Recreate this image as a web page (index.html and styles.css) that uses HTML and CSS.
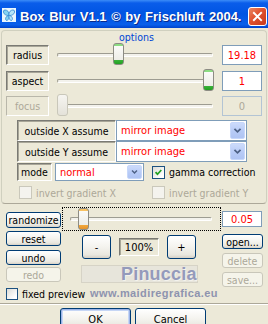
FILE: index.html
```html
<!DOCTYPE html>
<html>
<head>
<meta charset="utf-8">
<title>Box Blur</title>
<link rel="stylesheet" href="styles.css">
</head>
<body>
<div class="titlebar">
  <svg class="appicon" viewBox="0 0 14 14">
    <rect width="14" height="14" fill="#EAF6FD"/>
    <path d="M7 5 C6 2 2 1 1.5 3 C1 6 4 7.5 6.5 7.5 C4 8 2.5 11 4.5 12.5 C6 13 7 10 7 8 Z" fill="#86D3F2" stroke="#2F86D2" stroke-width="0.8"/>
    <path d="M7 5 C8 2 12 1 12.5 3 C13 6 10 7.5 7.5 7.5 C10 8 11.5 11 9.5 12.5 C8 13 7 10 7 8 Z" fill="#B6E6F8" stroke="#2F86D2" stroke-width="0.8"/>
  </svg>
  <span class="title">Box Blur V1.1 © by Frischluft 2004.</span>
  <span class="close">
    <svg viewBox="0 0 19 19"><path d="M5.5 5.5 L13.5 13.5 M13.5 5.5 L5.5 13.5" stroke="#fff" stroke-width="2.2" stroke-linecap="square"/></svg>
  </span>
</div>

<div class="group">
  <div class="legend">options</div>

  <div class="prow r1">
    <div class="sunken plabel">radius</div>
    <div class="slider">
      <div class="track"></div>
      <div class="thumb" style="left:56px"></div>
    </div>
    <div class="value">19.18</div>
  </div>

  <div class="prow r2">
    <div class="sunken plabel">aspect</div>
    <div class="slider">
      <div class="track"></div>
      <div class="thumb" style="left:146px"></div>
    </div>
    <div class="value">1</div>
  </div>

  <div class="prow r3 disabled">
    <div class="sunken plabel">focus</div>
    <div class="slider">
      <div class="track"></div>
      <div class="thumb off" style="left:0px"></div>
    </div>
    <div class="value">0</div>
  </div>

  <div class="arow ax">
    <div class="sunken alabel">outside X assume</div>
    <div class="combo wide"><span class="ctext">mirror image</span><span class="cbtn"><svg viewBox="0 0 15 17"><path d="M4 6.5 L7.5 10 L11 6.5" fill="none" stroke="#4D6185" stroke-width="2"/></svg></span></div>
  </div>
  <div class="arow ay">
    <div class="sunken alabel">outside Y assume</div>
    <div class="combo wide"><span class="ctext">mirror image</span><span class="cbtn"><svg viewBox="0 0 15 17"><path d="M4 6.5 L7.5 10 L11 6.5" fill="none" stroke="#4D6185" stroke-width="2"/></svg></span></div>
  </div>
  <div class="arow mode">
    <div class="sunken mlabel">mode</div>
    <div class="combo narrow"><span class="ctext">normal</span><span class="cbtn"><svg viewBox="0 0 15 17"><path d="M4 6.5 L7.5 10 L11 6.5" fill="none" stroke="#4D6185" stroke-width="2"/></svg></span></div>
    <span class="check on"><svg viewBox="0 0 13 13"><path d="M3 6 L5.3 8.5 L9.8 3.5" fill="none" stroke="#21A121" stroke-width="2"/></svg></span>
    <span class="clabel">gamma correction</span>
  </div>

  <div class="invrow">
    <div class="inv first"><span class="check off"></span><span class="clabel">invert gradient X</span></div>
    <div class="inv"><span class="check off"></span><span class="clabel">invert gradient Y</span></div>
  </div>
</div>

<div class="bottom">
  <div class="cell">
    <button class="btn rand">randomize</button>
  </div>
  <div class="cell">
    <div class="dotted">
      <div class="track"></div>
      <div class="thumb hot" style="left:15px"></div>
    </div>
  </div>
  <div class="cell">
    <div class="value small">0.05</div>
  </div>

  <div class="leftcol">
    <button class="btn b-reset">reset</button>
    <button class="btn b-undo">undo</button>
    <button class="btn b-redo dis">redo</button>
  </div>
  <div class="midcol">
    <div class="zoomrow">
      <button class="btn zb">-</button>
      <div class="sunken pct">100%</div>
      <button class="btn zb">+</button>
    </div>
    <div class="preview"></div>
  </div>
  <div class="rightcol">
    <button class="btn b-open">open...</button>
    <button class="btn b-del dis">delete</button>
    <button class="btn b-save dis">save...</button>
  </div>

  <div class="fixrow">
    <span class="check plain"></span><span class="clabel">fixed preview</span>
  </div>
</div>

<div class="footer">
  <button class="btn big default">OK</button>
  <button class="btn big">Cancel</button>
</div>

<div class="wm1">Pinuccia</div>
<div class="wm2">www.maidiregrafica.eu</div>
</body>
</html>
```

FILE: styles.css
```css
* { box-sizing: border-box; margin: 0; padding: 0; }
html, body { width: 268px; height: 324px; overflow: hidden; }
body {
  position: relative;
  background: #ECE9D8;
  font-family: "DejaVu Sans Condensed", "Liberation Sans", sans-serif;
  font-size: 10.5px;
  color: #000;
}

/* title bar */
.titlebar {
  height: 28px;
  display: flex;
  align-items: flex-start;
  color: #fff;
  background: linear-gradient(180deg, #3C8CF8 0, #0A5DEA 3px, #0054E3 50%, #0A5FEA 88%, #0043CC 100%);
}
.appicon { width: 14px; height: 14px; margin: 8px 0 0 2px; flex: none; }
.title {
  flex: 1;
  margin: 9px 0 0 4px;
  font: bold 13px/16px "Liberation Sans", sans-serif;
  white-space: nowrap;
  word-spacing: 1px;
  text-shadow: 1px 1px 0 #0A2A8A;
}
.close {
  flex: none;
  width: 19px; height: 19px;
  margin: 7px 1px 0 0;
  border: 1px solid #fff;
  border-radius: 3px;
  background: linear-gradient(135deg, #E98763 0, #E0512E 45%, #C63A1C 100%);
}
.close svg { display: block; width: 17px; height: 17px; }

/* options group */
.group {
  margin: 2px 1px 0;
  border: 1px solid #D0D0BF;
  border-bottom-color: #ACA899;
  border-radius: 4px;
  padding: 0 4px 4px 4px;
}
.legend {
  height: 13px;
  line-height: 13px;
  text-align: center;
  padding-left: 5px;
  color: #0046D5;
}
.prow { display: flex; align-items: center; height: 20px; }
.r1 { margin-top: 1px; }
.r2 { margin-top: 6px; }
.r3 { margin-top: 5px; }

.sunken {
  border: 1px solid;
  border-color: #7A7A74 #FFFFFF #FFFFFF #7A7A74;
  box-shadow: inset 1px 1px 0 #A8A698;
  display: flex; align-items: center; justify-content: center;
  white-space: nowrap;
}
.plabel { width: 43px; height: 20px; }
.slider { position: relative; width: 156px; height: 20px; margin-left: 8px; }
.track {
  position: absolute; left: 0; right: 0; top: 8px;
  height: 4px;
  border: 1px solid;
  border-color: #9D9C91 #FFFFFF #FFFFFF #9D9C91;
  border-radius: 2px;
  background: #F3F2EC;
}
.thumb {
  position: absolute; top: -2px;
  width: 11px; height: 22px;
  border: 1px solid #8D8C84;
  border-radius: 3px;
  background: linear-gradient(180deg, #8CDD82 0, #8CDD82 2px, #FBFBF9 2px, #EDEDE7 calc(100% - 4px), #3BB33B calc(100% - 4px), #21A121 100%);
}
.thumb.off { background: linear-gradient(180deg, #F6F5F1, #E4E2D9); border-color: #C9C7BA; }
.thumb.hot { top: 0; background: linear-gradient(180deg, #F9C262 0, #F9C262 2px, #FBFBF9 2px, #EDEDE7 calc(100% - 4px), #F2A93C calc(100% - 4px), #E5932B 100%); }

.value {
  width: 40px; height: 20px; margin-left: 9px;
  border: 1px solid #7F9DB9;
  background: #fff;
  color: #F00;
  display: flex; align-items: center; justify-content: center;
  font-size: 11px;
}
.disabled .plabel { color: #ACA899; border-color: #B9B7AA #FFFFFF #FFFFFF #B9B7AA; box-shadow: none; }
.disabled .value { background: #ECE9D8; border-color: #B3C4D4; color: #ACA899; }

/* assume rows */
.arow { display: flex; align-items: stretch; margin-left: 11px; }
.ax { margin-top: 4px; height: 21px; }
.ay { height: 21px; }
.mode { margin-top: 1px; height: 18px; align-items: center; }
.alabel { width: 99px; height: 21px; }
.mlabel { width: 35px; height: 18px; }
.combo {
  display: flex; align-items: center;
  border: 1px solid #7F9DB9;
  background: #fff;
  color: #F00;
  padding: 1px;
}
.combo.wide { width: 131px; height: 21px; }
.combo.narrow { width: 89px; height: 18px; margin-left: 3px; }
.ctext { flex: 1; padding-left: 3px; white-space: nowrap; font-size: 11px; }
.cbtn {
  flex: none; width: 15px; height: 100%;
  border: 1px solid #C6D7FA;
  border-radius: 2px;
  background: linear-gradient(180deg, #CCDBFB 0, #B6CAF6 60%, #AFC4F3 100%);
}
.cbtn svg { display: block; width: 100%; height: 100%; }

.check {
  flex: none;
  display: inline-block;
  width: 13px; height: 13px;
  border: 1px solid #1C5180;
  background: linear-gradient(135deg, #DCDCD7 0, #FFFFFF 80%);
}
.check svg { display: block; width: 11px; height: 11px; }
.mode .check { margin-left: 8px; }
.clabel { margin-left: 4px; white-space: nowrap; }
.check.off { border-color: #CAC8BB; background: #F4F3EE; }

.invrow { display: flex; margin-top: 5px; height: 13px; align-items: center; }
.inv { display: flex; align-items: center; color: #ACA899; }
.inv.first { width: 146px; padding-left: 13px; }

/* bottom section */
.bottom {
  display: grid;
  grid-template-columns: 56px 160px 40px;
  grid-template-rows: 24px 56px auto;
  margin-top: 3px;
  padding: 0 6px;
}
.btn {
  display: flex; align-items: center; justify-content: center;
  font: inherit;
  color: #000;
  border: 1px solid #003C74;
  border-radius: 3px;
  background: linear-gradient(180deg, #FFFFFF 0, #F4F3EE 50%, #E9E7DF 85%, #D6D0C5 100%);
  white-space: nowrap;
}
.btn.dis { border-color: #C9C7BA; background: #F5F4EA; color: #ACA899; }
.rand { width: 55px; height: 16px; margin-top: 5px; }
.dotted {
  position: relative;
  width: 159px; height: 24px;
  border: 1px dotted #000;
}
.dotted .track { left: 7px; right: 8px; top: 9px; }
.value.small { width: 40px; height: 16px; margin: 4px 0 0 0; }

.leftcol, .rightcol, .midcol { display: flex; flex-direction: column; }
.leftcol .btn { width: 55px; height: 15px; }
.b-undo { margin-top: 4px; }
.b-redo { margin-top: 2px; }
.rightcol .btn { width: 41px; height: 15px; }
.b-open { margin-top: 3px; }
.b-del, .b-save { margin-top: 4px; }

.zoomrow { display: flex; align-items: center; margin: 4px 0 0 20px; height: 24px; }
.zb { width: 29px; height: 24px; font-size: 11px; }
.pct { width: 40px; height: 18px; margin: 0 8px; font-size: 11px; }
.preview {
  width: 117px; height: 18px;
  margin: 6px 0 0 19px;
  border: 1px solid #D6D3C6;
  background: #E7E5DB;
}

.fixrow { grid-column: 1 / 4; display: flex; align-items: center; margin-top: 1px; height: 12px; }
.check.plain { width: 12px; height: 12px; }

/* footer */
.footer {
  display: flex;
  justify-content: center;
  gap: 4px;
  margin-top: 3px;
  padding: 4px 2px 0 0;
  border-top: 1px solid #ACA899;
  box-shadow: inset 0 1px 0 #FFFFFF;
}
.btn.big { width: 71px; height: 22px; font-size: 11px; }
.btn.default { box-shadow: inset 0 0 0 1px #9DB4E8, inset 0 0 0 2px #C6D6F5; }

/* watermark overlay */
.wm1 {
  position: absolute; left: 121px; top: 263px;
  font: bold 18px/22px "Liberation Sans", sans-serif;
  color: #8C92B8;
  letter-spacing: 0.2px;
  text-shadow: 1px 1px 0 rgba(255,255,255,0.6);
  opacity: 0.9;
}
.wm2 {
  position: absolute; left: 90px; top: 287px;
  font: bold 11px/12px "Liberation Sans", sans-serif;
  color: #7E85A8;
  letter-spacing: 0.4px;
  opacity: 0.85;
}
```
